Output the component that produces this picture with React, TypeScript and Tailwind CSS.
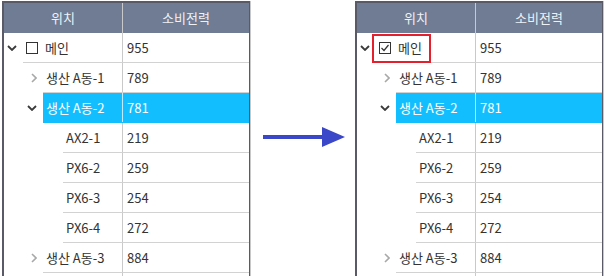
import React from "react";

type Row = {
  label: string;
  value: string;
  level: 0 | 1 | 2;
  toggle?: "open" | "closed";
  checkbox?: boolean;
  selected?: boolean;
};

const rows: Row[] = [
  { label: "메인", value: "955", level: 0, toggle: "open", checkbox: true },
  { label: "생산 A동-1", value: "789", level: 1, toggle: "closed" },
  { label: "생산 A동-2", value: "781", level: 1, toggle: "open", selected: true },
  { label: "AX2-1", value: "219", level: 2 },
  { label: "PX6-2", value: "259", level: 2 },
  { label: "PX6-3", value: "254", level: 2 },
  { label: "PX6-4", value: "272", level: 2 },
  { label: "생산 A동-3", value: "884", level: 1, toggle: "closed" },
  { label: "", value: "", level: 1 },
];

const indentClass = ["w-[19px]", "w-[39px]", "w-[59px]"];
const labelClass = ["w-[100px]", "w-[80px]", "w-[60px]"];

function Chevron({ open }: { open: boolean }) {
  if (open) {
    return (
      <svg width="10" height="6" viewBox="0 0 10 6" fill="none">
        <polyline points="1,1 5,5 9,1" stroke="#3a3a3a" strokeWidth="1.8" />
      </svg>
    );
  }
  return (
    <svg width="6" height="10" viewBox="0 0 6 10" fill="none">
      <polyline points="1,1 5,5 1,9" stroke="#a8a8a8" strokeWidth="1.6" />
    </svg>
  );
}

function Checkbox({ checked }: { checked: boolean }) {
  return (
    <span className="flex h-[12px] w-[12px] shrink-0 items-center justify-center border border-[#333] bg-white">
      {checked && (
        <svg width="10" height="10" viewBox="0 0 10 10" fill="none">
          <polyline points="1.5,5 4,7.5 8.5,2" stroke="#333" strokeWidth="1.2" />
        </svg>
      )}
    </span>
  );
}

function Tree({ checked }: { checked: boolean }) {
  return (
    <div className="h-[300px] w-[248px] shrink-0 border-l-2 border-t-2 border-r border-[#5a5a66] bg-white shadow-[1px_0_0_#c8c8c8]">
      <div className="flex h-[30px] bg-[#6f7c93] text-[#eef1f6]">
        <div className="flex w-[119px] items-center justify-center border-r border-[#c9c9c9]">위치</div>
        <div className="flex flex-1 items-center justify-center">소비전력</div>
      </div>
      {rows.map((row, i) => (
        <div key={i} className="relative flex h-[30px]">
          <div className={`${indentClass[row.level]} flex shrink-0 items-center justify-end pr-[6px]`}>
            {row.toggle && <Chevron open={row.toggle === "open"} />}
          </div>
          <div
            className={`flex flex-1 border-b ${
              row.selected ? "border-[#13beff] bg-[#13beff] text-white" : "border-[#d2d2d2] text-[#333]"
            }`}
          >
            <div
              className={`${labelClass[row.level]} flex shrink-0 items-center gap-[7px] border-r pl-[3px] ${
                row.selected ? "border-[#bfeaff]" : "border-[#c9c9c9]"
              }`}
            >
              {row.checkbox && <Checkbox checked={checked} />}
              <span className="whitespace-nowrap">{row.label}</span>
            </div>
            <div className="flex flex-1 items-center pl-[4px]">{row.value}</div>
          </div>
          {checked && row.checkbox && (
            <div className="absolute left-[15px] top-[1px] h-[29px] w-[59px] border-2 border-[#e3202c]" />
          )}
        </div>
      ))}
    </div>
  );
}

export default function App() {
  return (
    <div
      className="flex h-[276px] w-[606px] overflow-hidden bg-white pl-[2px] pt-[1px] text-[13px]"
      style={{ fontFamily: '"Noto Sans CJK KR", "Noto Sans", sans-serif' }}
    >
      <Tree checked={false} />
      <div className="w-[105px] shrink-0 pl-[13px] pt-[125px]">
        <svg width="82" height="22" viewBox="0 0 82 22">
          <line x1="0" y1="11" x2="61" y2="11" stroke="#3b47c9" strokeWidth="4" strokeLinecap="round" />
          <polygon points="59,1 82,11 59,21" fill="#3b47c9" />
        </svg>
      </div>
      <Tree checked />
    </div>
  );
}
